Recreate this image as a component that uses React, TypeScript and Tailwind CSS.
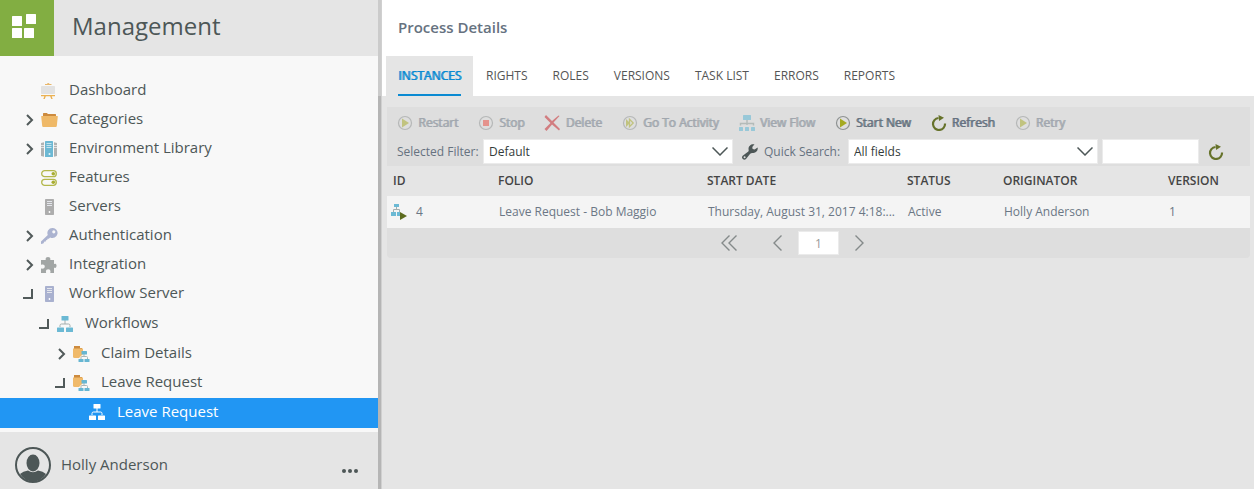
import { useState } from 'react'
import type { ReactNode } from 'react'

type NodeState = 'closed' | 'open' | 'leaf'

function DashboardIcon() {
  return (
    <svg width="16" height="16" viewBox="0 0 16 16" aria-hidden="true">
      <path d="M4 1h2a1.300 1.300 0 0 1 2.500 0H10.500v1H4z" fill="#e8b76c" />
      <rect x="0" y="3" width="14" height="8" rx="0.8" fill="#e2e2e2" />
      <path d="M0 12h14v1.200h-3.300l1 2.800h-1.500l-1-2.800H4.800l-1 2.800H2.300l1-2.800H0z" fill="#ebb152" />
    </svg>
  )
}

function FolderIcon() {
  return (
    <svg width="17" height="16" viewBox="0 0 17 16" aria-hidden="true">
      <path d="M2 1.6Q2 1 2.6 1h3.2L7 2h7.4q.6 0 .6.6V6H2z" fill="#cd8b3e" />
      <path d="M.6 4h15.800q.5 0 .4.6L15.800 14q-.1 1-1 1H2.200q-.9 0-1-1L.2 4.600Q.1 4 .6 4z" fill="#efb968" />
    </svg>
  )
}

function LibraryIcon() {
  return (
    <svg width="16" height="16" viewBox="0 0 16 16" aria-hidden="true">
      <path d="M0 2l4-1v15l-4-1zM16 2l-4-1v15l4-1z" fill="#b0b3b3" />
      <path d="M0 4.500h3M0 6.500h3M13 4.500h3M13 6.500h3" stroke="#e3e3e3" />
      <path d="M3.500 0v16M12.500 0v16" stroke="#f8f8f8" />
      <rect x="4" width="8" height="16" rx="0.6" fill="#6cb8d3" />
      <path d="M5.500 2.500h5M5.500 4.500h5M5.500 6.500h5" stroke="#c5e3ee" />
      <circle cx="8.500" cy="13" r="1" fill="#e8f5fa" />
    </svg>
  )
}

function FeaturesIcon() {
  return (
    <svg width="16" height="16" viewBox="0 0 16 16" fill="none" aria-hidden="true">
      <rect x="0.7" y="0.7" width="14.6" height="6" rx="3" stroke="#b3b74b" strokeWidth="1.3" />
      <rect x="0.7" y="9.3" width="14.6" height="6" rx="3" stroke="#b3b74b" strokeWidth="1.3" />
      <circle cx="12.3" cy="3.8" r="1.8" fill="#a9ad30" />
      <circle cx="12.3" cy="12.3" r="1.8" fill="#a9ad30" />
    </svg>
  )
}

function ServerIcon({ color }: { color: string }) {
  return (
    <svg width="16" height="16" viewBox="0 0 16 16" aria-hidden="true">
      <rect x="4" width="9" height="16" rx="0.7" fill={color} />
      <path d="M6 2.500h5M6 4.500h5M6 6.500h5" stroke="#e4e6ec" />
      <circle cx="8.500" cy="13" r="0.900" fill="#fff" />
    </svg>
  )
}

function KeyIcon() {
  return (
    <svg width="17" height="16" viewBox="0 0 17 16" aria-hidden="true">
      <path
        fillRule="evenodd"
        d="M11.300 0a5 5 0 1 1-2.100 9.400L7.800 10.700 6.500 10.800 6.300 12 5 12.200 4.800 13.500 3.500 13.600 2.300 15.600 0 16v-2.400L6.800 7A5 5 0 0 1 11.300 0zM12.800 2.200a1.600 1.600 0 1 0 0 3.200 1.600 1.600 0 0 0 0-3.200z"
        fill="#abb3d0"
      />
    </svg>
  )
}

function PuzzleIcon() {
  return (
    <svg width="16" height="16" viewBox="0 0 16 16" aria-hidden="true">
      <path
        d="M0 3h4.500C5 2.600 4.600 2.300 4.600 1.700a2.400 1.700 0 0 1 4.800 0c0 .6-.4.900.1 1.300H13v3.700c.5.400 1 0 1.500 0a1.500 2.200 0 0 1 0 4.200c-.6 0-1-.5-1.500 0V16H9.500c-.5-.6 0-1 0-1.700a2.300 2 0 0 0-4.600 0c0 .7.5 1.100 0 1.700H0v-4.300c.6-.4 1 0 1.800 0a2 2.100 0 0 0 0-4.200C1 7.500.6 7.900 0 7.500z"
        fill="#a2a6a5"
      />
    </svg>
  )
}

function FlowIcon({ box, line }: { box: string; line: string }) {
  return (
    <svg width="16" height="16" viewBox="0 0 16 16" aria-hidden="true">
      <path d="M8 4v4M3 11V9.500q0-1.500 1.500-1.500h7q1.500 0 1.500 1.500V11" stroke={line} fill="none" />
      <rect x="4.500" width="7" height="4.500" rx="0.600" fill={box} />
      <rect y="11.500" width="7" height="4.500" rx="0.600" fill={box} />
      <rect x="9" y="11.500" width="7" height="4.500" rx="0.600" fill={box} />
    </svg>
  )
}

function FolderFlowIcon() {
  return (
    <svg width="17" height="16" viewBox="0 0 17 16" aria-hidden="true">
      <path d="M1 0h6v2h2v2H1z" fill="#cd8b3e" />
      <path d="M0 2.500h10V8L6 12H1.500Q0 12 0 10.500z" fill="#f0ba6a" />
      <path d="M11 8v2.500M8 13v-1.500q0-1 1-1h4.500q1 0 1 1V13" stroke="#a9b5b5" fill="none" />
      <rect x="8.500" y="5" width="5.500" height="3.500" rx="0.500" fill="#66b6d2" />
      <rect x="5.500" y="13" width="5" height="3" rx="0.500" fill="#66b6d2" />
      <rect x="11.500" y="13" width="5" height="3" rx="0.500" fill="#66b6d2" />
    </svg>
  )
}

function Arrow({ state }: { state: NodeState }) {
  if (state === 'leaf') return null
  return (
    <svg width="12" height="12" viewBox="0 0 12 12" fill="none" stroke="#515a5a" strokeWidth="2" aria-hidden="true">
      {state === 'open' ? <path d="M1 10h9V1" /> : <path d="M5 1l5 5-5 5" />}
    </svg>
  )
}

function TreeItem({
  label,
  icon,
  state = 'leaf',
  selected = false,
  indent = 'pl-[22px]',
  children,
}: {
  label: string
  icon: ReactNode
  state?: NodeState
  selected?: boolean
  indent?: string
  children?: ReactNode
}) {
  return (
    <li>
      <button
        type="button"
        className={`flex w-full items-center text-left text-[15px] ${indent} ${
          selected ? 'h-[30px] bg-[#2196f3] pb-0.5 text-white' : 'h-[29px] text-[#4d5757]'
        }`}
      >
        <span className="w-[19px] shrink-0">
          <Arrow state={state} />
        </span>
        <span className="w-7 shrink-0">{icon}</span>
        <span className="-mt-0.5">{label}</span>
      </button>
      {children && <ul className="pt-px">{children}</ul>}
    </li>
  )
}

function Sidebar() {
  return (
    <aside className="flex w-[378px] shrink-0 flex-col bg-[#f8f8f8]">
      <header className="flex h-14 bg-[#e5e5e5]">
        <div className="w-[54px] bg-[#82ae42]">
          <svg width="54" height="56" viewBox="0 0 54 56" fill="#fff" aria-hidden="true">
            <rect x="12" y="16" width="10" height="10" rx="0.500" />
            <rect x="26" y="14" width="10" height="10" rx="0.500" />
            <rect x="12" y="28" width="10" height="10" rx="0.500" />
            <rect x="24" y="28" width="10" height="10" rx="0.500" />
          </svg>
        </div>
        <h1 className="pt-2 pl-[18px] text-2xl leading-9 text-[#4d5757]">Management</h1>
      </header>
      <nav className="grow pt-5 pb-1">
        <ul>
          <TreeItem label="Dashboard" icon={<DashboardIcon />} />
          <TreeItem label="Categories" icon={<FolderIcon />} state="closed" />
          <TreeItem label="Environment Library" icon={<LibraryIcon />} state="closed" />
          <TreeItem label="Features" icon={<FeaturesIcon />} />
          <TreeItem label="Servers" icon={<ServerIcon color="#adadad" />} />
          <TreeItem label="Authentication" icon={<KeyIcon />} state="closed" />
          <TreeItem label="Integration" icon={<PuzzleIcon />} state="closed" />
          <TreeItem label="Workflow Server" icon={<ServerIcon color="#a9b1cf" />} state="open">
            <TreeItem
              label="Workflows"
              icon={<FlowIcon box="#6bb9d4" line="#a3aeae" />}
              state="open"
              indent="pl-[38px]"
            >
              <TreeItem label="Claim Details" icon={<FolderFlowIcon />} state="closed" indent="pl-[54px]" />
              <TreeItem label="Leave Request" icon={<FolderFlowIcon />} state="open" indent="pl-[54px]">
                <TreeItem
                  label="Leave Request"
                  icon={<FlowIcon box="#fff" line="#fff" />}
                  indent="pl-[70px]"
                  selected
                />
              </TreeItem>
            </TreeItem>
          </TreeItem>
        </ul>
      </nav>
      <footer className="flex h-[57px] items-center bg-[#e5e5e5] pt-2 pr-5 pl-[15px] text-[#4d5757]">
        <svg width="36" height="36" viewBox="0 0 36 36" aria-hidden="true">
          <circle cx="18" cy="18" r="17" fill="none" stroke="#4d5757" strokeWidth="2" />
          <ellipse cx="18" cy="16" rx="6.500" ry="8.500" fill="#4d5757" />
          <path d="M5 27q3-3 8-3.500 5 3.500 10 0 5 .5 8 3.500-5 7.500-13 7.500T5 27z" fill="#4d5757" />
        </svg>
        <span className="grow pl-2.5 text-[15px]">Holly Anderson</span>
        <button type="button" aria-label="More options" className="pt-3">
          <svg width="16" height="4" viewBox="0 0 16 4" fill="#4d5757" aria-hidden="true">
            <circle cx="2" cy="2" r="2" />
            <circle cx="8" cy="2" r="2" />
            <circle cx="14" cy="2" r="2" />
          </svg>
        </button>
      </footer>
    </aside>
  )
}

function PlayIcon() {
  return (
    <svg width="16" height="16" viewBox="0 0 16 16" aria-hidden="true">
      <circle cx="8" cy="8" r="6.500" fill="none" stroke="#8f9393" strokeWidth="1.200" />
      <path d="M5 3.500L12 8l-7 4.500z" fill="#a5aa22" />
    </svg>
  )
}

function StopIcon() {
  return (
    <svg width="16" height="16" viewBox="0 0 16 16" aria-hidden="true">
      <circle cx="8" cy="8" r="6.500" fill="none" stroke="#8f9393" strokeWidth="1.200" />
      <rect x="5" y="5" width="6" height="6" fill="#ec4b3f" />
    </svg>
  )
}

function DeleteIcon() {
  return (
    <svg width="16" height="16" viewBox="0 0 16 16" aria-hidden="true">
      <path d="M2 0l6 6 6.500-5.500L15.500 1 9.500 7.500 16 14l-1 1.500L8 9.500 2.500 16 .5 14 6.500 8 .5 2z" fill="#c81e24" />
    </svg>
  )
}

function ActivityIcon() {
  return (
    <svg width="16" height="16" viewBox="0 0 16 16" fill="none" aria-hidden="true">
      <circle cx="8" cy="8" r="6.500" stroke="#8f9393" strokeWidth="1.200" />
      <path d="M4 4l4 4-4 4z" fill="#a5aa22" />
      <path d="M7.500 4.300L11.200 8 7.500 11.700z" stroke="#a5aa22" strokeWidth="1.300" />
    </svg>
  )
}

function ViewFlowIcon() {
  return (
    <svg width="16" height="16" viewBox="0 0 16 16" aria-hidden="true">
      <path d="M8 5v5M1.500 10.500V8.500h13v2" stroke="#8c9a96" strokeWidth="1.400" fill="none" />
      <rect x="4" width="8" height="5" rx="0.500" fill="#55b4d3" />
      <rect y="12" width="4" height="4" rx="0.500" fill="#55b4d3" />
      <rect x="6" y="12" width="4" height="4" rx="0.500" fill="#55b4d3" />
      <rect x="12" y="12" width="4" height="4" rx="0.500" fill="#55b4d3" />
    </svg>
  )
}

function RefreshIcon() {
  return (
    <svg width="16" height="16" viewBox="0 0 16 16" aria-hidden="true">
      <path d="M7.500 3a6 6 0 1 0 6.500 5.500" fill="none" stroke="#66722a" strokeWidth="2.200" />
      <path d="M7.500 0l5.500 2.800L8 6z" fill="#66722a" />
    </svg>
  )
}

function WrenchIcon() {
  return (
    <svg width="16" height="16" viewBox="0 0 16 16" aria-hidden="true">
      <path
        fillRule="evenodd"
        d="M12.500.3L10.300 3l.3 2 2 .6 3-2.200c.8 3-1.600 5.900-4.600 5.600-1.300-.2-2 .1-2.800.8L4 15A2.300 2.300 0 0 1 .7 11.800L6 7.700c.7-.6.8-1 .6-2C6 2.300 9-.6 12.500.3zM2.600 12.300a1 1 0 1 0 0 2 1 1 0 0 0 0-2z"
        fill="#4d5757"
      />
    </svg>
  )
}

const tabs = ['INSTANCES', 'RIGHTS', 'ROLES', 'VERSIONS', 'TASK LIST', 'ERRORS', 'REPORTS']

const actions = [
  { label: 'Restart', icon: <PlayIcon />, disabled: true },
  { label: 'Stop', icon: <StopIcon />, disabled: true },
  { label: 'Delete', icon: <DeleteIcon />, disabled: true },
  { label: 'Go To Activity', icon: <ActivityIcon />, disabled: true },
  { label: 'View Flow', icon: <ViewFlowIcon />, disabled: true },
  { label: 'Start New', icon: <PlayIcon />, disabled: false },
  { label: 'Refresh', icon: <RefreshIcon />, disabled: false },
  { label: 'Retry', icon: <PlayIcon />, disabled: true },
]

function Dropdown({ id, option }: { id: string; option: string }) {
  return (
    <div className="relative w-[250px]">
      <select
        id={id}
        className="block h-[25px] w-full appearance-none border border-[#ebebeb] bg-white pr-8 pl-[5px] text-xs text-[#333b3b]"
      >
        <option>{option}</option>
      </select>
      <svg
        width="16"
        height="9"
        viewBox="0 0 16 9"
        fill="none"
        stroke="#4d5757"
        strokeWidth="1.500"
        aria-hidden="true"
        className="pointer-events-none absolute top-2 right-[5px]"
      >
        <path d="M.5.5L8 8 15.500.5" />
      </svg>
    </div>
  )
}

function Toolbar() {
  return (
    <div className="bg-[#dedede] pb-0.5">
      <div className="flex h-8 flex-wrap items-center gap-x-5 pb-px pl-2.5">
        {actions.map((a) => (
          <button
            key={a.label}
            type="button"
            disabled={a.disabled}
            className="flex items-center gap-[5px] text-xs text-[#667280] text-shadow-[1px_0_0_#667280] disabled:opacity-50"
          >
            {a.icon}
            {a.label}
          </button>
        ))}
      </div>
      <div className="flex h-[25px] items-center pl-2.5 text-xs text-[#667280]">
        <label htmlFor="filter" className="w-[86px]">
          Selected Filter:
        </label>
        <Dropdown id="filter" option="Default" />
        <button type="button" aria-label="Edit filter" className="ml-[9px]">
          <WrenchIcon />
        </button>
        <label htmlFor="field" className="ml-[6px] w-[84px]">
          Quick Search:
        </label>
        <Dropdown id="field" option="All fields" />
        <input
          type="text"
          aria-label="Search text"
          className="ml-1 h-[25px] w-[97px] border border-[#ebebeb] bg-white px-1 text-xs"
        />
        <button type="button" aria-label="Search" className="ml-[9px]">
          <RefreshIcon />
        </button>
      </div>
    </div>
  )
}

function InstancesTable() {
  return (
    <table className="w-full table-fixed text-left text-xs">
      <thead>
        <tr className="h-[30px] text-[#444]">
          <th className="w-[105px] pl-1.5 font-semibold">ID</th>
          <th className="w-[209px] pl-1.5 font-semibold">FOLIO</th>
          <th className="w-[200px] pl-1.5 font-semibold">START DATE</th>
          <th className="w-24 pl-1.5 font-semibold">STATUS</th>
          <th className="w-[165px] pl-1.5 font-semibold">ORIGINATOR</th>
          <th className="pl-1.5 font-semibold">VERSION</th>
        </tr>
      </thead>
      <tbody>
        <tr className="h-8 bg-[#f4f4f4] text-[#6b7785]">
          <td className="pl-1">
            <div className="flex items-center gap-[9px]">
              <svg width="16" height="16" viewBox="0 0 16 16" aria-hidden="true">
                <path d="M5.500 3v3M2.500 8V5.500h6V8" stroke="#a3aeae" fill="none" />
                <rect x="3" width="5" height="3" fill="#6bb9d4" />
                <rect y="8" width="5" height="4" fill="#6bb9d4" />
                <rect x="6" y="8" width="3" height="4" fill="#6bb9d4" />
                <path d="M9 8l7 4-7 4z" fill="#5c6b1e" />
              </svg>
              4
            </div>
          </td>
          <td className="pl-[7px]">Leave Request - Bob Maggio</td>
          <td className="pl-[7px] whitespace-nowrap">Thursday, August 31, 2017 4:18:...</td>
          <td className="pl-[7px]">Active</td>
          <td className="pl-[7px]">Holly Anderson</td>
          <td className="pl-[7px]">1</td>
        </tr>
      </tbody>
    </table>
  )
}

function Pager() {
  return (
    <div className="flex h-[30px] items-center justify-center rounded-b bg-[#dedede] pr-[52px]">
      <button type="button" aria-label="First page" className="mr-9">
        <svg width="16" height="16" viewBox="0 0 16 16" fill="none" stroke="#858a8a" strokeWidth="1.400" aria-hidden="true">
          <path d="M8.500.5L1 8l7.500 7.500M15.500.5L8 8l7.500 7.500" />
        </svg>
      </button>
      <button type="button" aria-label="Previous page" className="mr-4">
        <svg width="9" height="16" viewBox="0 0 9 16" fill="none" stroke="#858a8a" strokeWidth="1.400" aria-hidden="true">
          <path d="M8.500.5L1 8l7.500 7.500" />
        </svg>
      </button>
      <input
        type="text"
        aria-label="Page number"
        defaultValue="1"
        className="mr-4 h-6 w-[41px] border border-[#ebebeb] bg-white text-center text-xs text-[#999]"
      />
      <button type="button" aria-label="Next page">
        <svg width="9" height="16" viewBox="0 0 9 16" fill="none" stroke="#858a8a" strokeWidth="1.400" aria-hidden="true">
          <path d="M.5.5L8 8 .5 15.500" />
        </svg>
      </button>
    </div>
  )
}

export default function App() {
  const [active, setActive] = useState('INSTANCES')

  return (
    <div className="flex min-h-screen bg-[#e5e5e5] font-['Open_Sans',sans-serif]">
      <Sidebar />
      <div className="flex w-1 shrink-0 flex-col border-r border-[#d0d0d0] bg-[#b5b5b5]">
        <div className="h-24 bg-[#cbcbcb]" />
      </div>
      <main className="min-w-0 grow">
        <header className="bg-white pl-1">
          <h2 className="h-14 pt-4 pl-3 text-[15px] leading-[22px] font-semibold text-[#667280]">Process Details</h2>
          <nav className="flex h-10 gap-px">
            {tabs.map((tab) => (
              <button
                key={tab}
                type="button"
                onClick={() => setActive(tab)}
                className={`h-10 px-3 text-xs ${
                  tab === active
                    ? 'bg-[#e5e5e5] text-[#0a8ad2] text-shadow-[1px_0_0_#0a8ad2]'
                    : 'text-[#555]'
                }`}
              >
                <span
                  className={`block h-10 leading-[39px] ${tab === active ? 'border-b-2 border-[#0a8ad2]' : ''}`}
                >
                  {tab}
                </span>
              </button>
            ))}
          </nav>
        </header>
        <section className="pt-[11px] pr-1 pl-[5px]">
          <Toolbar />
          <InstancesTable />
          <Pager />
        </section>
      </main>
    </div>
  )
}
